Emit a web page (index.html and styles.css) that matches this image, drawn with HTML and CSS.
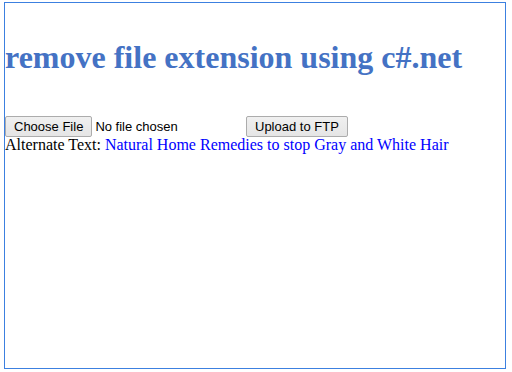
FILE: index.html
```html
<!DOCTYPE html>
<html>
<head>
	<meta charset="utf-8">
	<meta name="viewport" content="width=device-width, initial-scale=1">
	<link rel="stylesheet" href="styles.css">
</head>
<body>
<div class="frame">
   <h1>remove file extension using c#.net</h1>
   <div class="upload-row">
      <label class="file-input">
         <span class="btn">Choose File</span>
         <span class="file-name">No file chosen</span>
      </label>
      <button class="btn">Upload to FTP</button>
   </div>
   <div class="alt-text">
      Alternate Text: <span class="alt-link">Natural Home Remedies to stop Gray and White Hair</span>
   </div>
</div>
</body>
</html>
```

FILE: styles.css
```css
body {
   margin: 0;
   background: #fff;
   font-family: "Liberation Serif", "Times New Roman", serif;
   font-size: 16px;
   color: #000;
}

.frame {
   box-sizing: border-box;
   width: 502px;
   height: 367px;
   margin: 2px 0 0 4px;
   border: 1px solid #3c80e0;
   overflow: hidden;
}

.frame h1 {
   margin: 36px 0 40px;
   font-size: 32px;
   font-weight: bold;
   color: #4472c4;
}

.upload-row {
   display: flex;
   align-items: flex-start;
   height: 20px;
}

.file-input {
   display: flex;
   align-items: center;
   width: 241px;
}

.btn {
   box-sizing: border-box;
   display: inline-flex;
   align-items: center;
   height: 21px;
   padding: 0 8px;
   border: 1px solid #acacac;
   border-radius: 2px;
   background: linear-gradient(#f0f0f0, #e5e5e5);
   font-family: "Liberation Sans", Arial, sans-serif;
   font-size: 13px;
   color: #000;
   margin: 0;
}

.file-name {
   font-family: "Liberation Sans", Arial, sans-serif;
   font-size: 13px;
   margin-left: 3px;
}

.alt-text {
   line-height: 18px;
}

.alt-link {
   color: #0000ff;
}
```
